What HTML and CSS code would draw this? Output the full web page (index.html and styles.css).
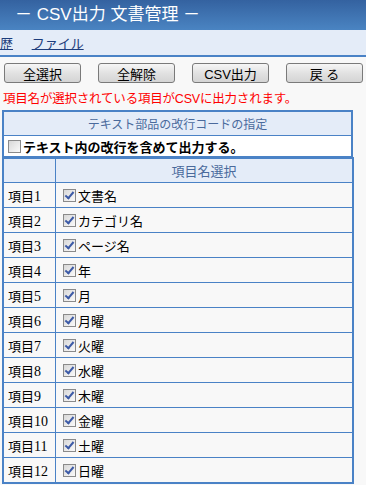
FILE: index.html
```html
<!DOCTYPE html>
<html lang="ja">
<head>
  <meta charset="UTF-8">
  <title>CSV出力 文書管理</title>
  <link rel="stylesheet" href="styles.css">
</head>
<body>
  <div class="title">－ CSV出力 文書管理 －</div>
  <div class="nav">
    <a href="#">歴</a>
    <a href="#">ファイル</a>
  </div>

  <div class="buttons">
    <button class="btn">全選択</button>
    <button class="btn">全解除</button>
    <button class="btn">CSV出力</button>
    <button class="btn">戻 る</button>
  </div>

  <p class="notice">項目名が選択されている項目がCSVに出力されます。</p>

  <table class="opt">
    <tr><th>テキスト部品の改行コードの指定</th></tr>
    <tr><td class="bold"><span class="cb"></span>テキスト内の改行を含めて出力する。</td></tr>
  </table>

  <table class="items">
    <tr><th class="num"></th><th>項目名選択</th></tr>
    <tr><td class="num">項目<span class="n">1</span></td><td><span class="cb on"></span>文書名</td></tr>
    <tr><td class="num">項目<span class="n">2</span></td><td><span class="cb on"></span>カテゴリ名</td></tr>
    <tr><td class="num">項目<span class="n">3</span></td><td><span class="cb on"></span>ページ名</td></tr>
    <tr><td class="num">項目<span class="n">4</span></td><td><span class="cb on"></span>年</td></tr>
    <tr><td class="num">項目<span class="n">5</span></td><td><span class="cb on"></span>月</td></tr>
    <tr><td class="num">項目<span class="n">6</span></td><td><span class="cb on"></span>月曜</td></tr>
    <tr><td class="num">項目<span class="n">7</span></td><td><span class="cb on"></span>火曜</td></tr>
    <tr><td class="num">項目<span class="n">8</span></td><td><span class="cb on"></span>水曜</td></tr>
    <tr><td class="num">項目<span class="n">9</span></td><td><span class="cb on"></span>木曜</td></tr>
    <tr><td class="num">項目<span class="n">10</span></td><td><span class="cb on"></span>金曜</td></tr>
    <tr><td class="num">項目<span class="n">11</span></td><td><span class="cb on"></span>土曜</td></tr>
    <tr><td class="num">項目<span class="n">12</span></td><td><span class="cb on"></span>日曜</td></tr>
  </table>
</body>
</html>
```

FILE: styles.css
```css
body {
  margin: 0;
  background: #f8f8f8;
  color: #000;
  font-family: "Liberation Sans", "Noto Sans CJK JP", sans-serif;
  font-size: 13px;
  overflow: hidden;
}

.title {
  height: 30px;
  line-height: 29px;
  padding-left: 15px;
  background: linear-gradient(#3462a0, #4a84c2);
  color: #fff;
  font-size: 17px;
  white-space: nowrap;
}

.nav {
  height: 25px;
  line-height: 27px;
  background: #e4ecf8;
  border-bottom: 2px solid #4a82c6;
  font-size: 13px;
  white-space: nowrap;
}

.nav a {
  color: #1c3c7c;
  margin-right: 15px;
}

.buttons {
  display: flex;
  justify-content: space-between;
  margin: 6px 3px 0 4px;
}

.btn {
  width: 77px;
  height: 20px;
  padding: 0;
  border: 1px solid #7a7a7a;
  border-radius: 3px;
  background: linear-gradient(#f6f6f6, #e2e2e2 50%, #d4d4d4);
  font-family: "Liberation Sans", "Noto Sans CJK JP", sans-serif;
  font-size: 13px;
  color: #000;
}

.notice {
  margin: 9px 0 0 3px;
  color: #f00;
  font-size: 12.5px;
  line-height: 15px;
  letter-spacing: -0.2px;
}

table {
  border-collapse: collapse;
  margin-left: 2px;
  border: 2px solid #4a82c6;
}

td, th {
  border: 1px solid #4a82c6;
  padding: 0 3px;
  text-align: left;
  font-weight: normal;
}

th {
  background: #e4ecf8;
  color: #4a6a9c;
  text-align: center;
}

.opt {
  width: 351px;
  margin-top: 3px;
}

.opt th {
  height: 23px;
  font-size: 12px;
}

.opt td {
  height: 20px;
  background: #fff;
  padding: 0 2px;
}

.bold {
  font-weight: bold;
}

.items {
  width: 352px;
  margin-top: -1px;
}

.items th {
  height: 23px;
}

.items td {
  height: 24px;
}

.items .num {
  width: 44px;
  padding-left: 4px;
}

.n {
  font-family: "Liberation Serif", serif;
  font-size: 14px;
}

.cb {
  display: inline-block;
  width: 11px;
  height: 11px;
  margin: 0 2px 0 2px;
  vertical-align: -1px;
  border: 1px solid #8a8a8a;
  background: linear-gradient(135deg, #d8d8d8, #fafafa);
  position: relative;
}

.items .cb {
  margin-left: 4px;
}

.cb.on::after {
  content: "";
  position: absolute;
  left: 3px;
  top: 0px;
  width: 3px;
  height: 7px;
  border: solid #3c5aa6;
  border-width: 0 2px 2px 0;
  transform: rotate(40deg);
}
```
